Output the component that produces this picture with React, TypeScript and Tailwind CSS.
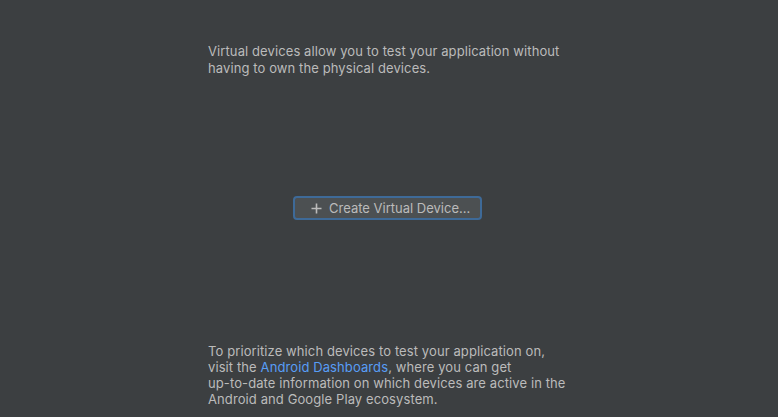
export default function App() {
  return (
    <div
      className="w-[778px] h-[417px] bg-[#3c3f41] text-[#bbbbbb] text-[13px] leading-[16px] flex flex-col tracking-[0.1px]"
      style={{ fontFamily: "Inter, 'Liberation Sans', sans-serif" }}
    >
      <div className="pl-[208px] mt-[43px] leading-[17px]">
        <p>Virtual devices allow you to test your application without</p>
        <p>having to own the physical devices.</p>
      </div>
      <div className="mt-[119px] pl-[293px]">
        <button className="w-[189px] h-[24px] rounded-[4px] border-2 border-[#3e6a98] bg-[#4c5052] text-[#bbbbbb] flex items-center pl-[16px] gap-[7px] text-[13px] tracking-normal">
          <svg width="11" height="11" viewBox="0 0 11 11" className="shrink-0">
            <path d="M5.5 0.5V10.5M0.5 5.5H10.5" stroke="#bbbbbb" strokeWidth="1.6" />
          </svg>
          <span>Create Virtual Device...</span>
        </button>
      </div>
      <div className="pl-[208px] mt-[123px]">
        <p>To prioritize which devices to test your application on,</p>
        <p>
          visit the <span className="text-[#589df6]">Android Dashboards</span>, where you can get
        </p>
        <p>up-to-date information on which devices are active in the</p>
        <p>Android and Google Play ecosystem.</p>
      </div>
    </div>
  );
}
